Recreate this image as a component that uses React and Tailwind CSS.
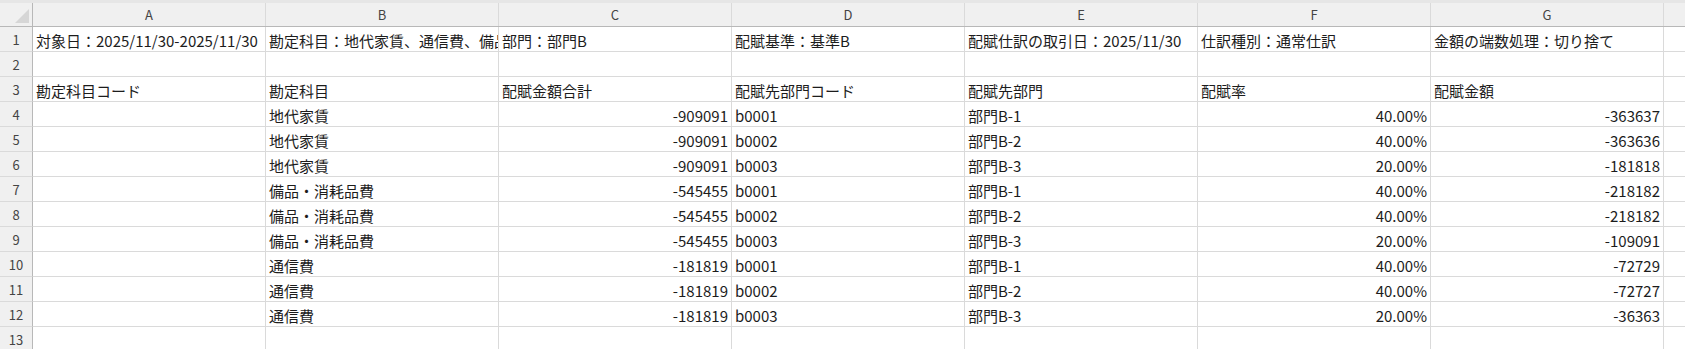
const COLS = ['A', 'B', 'C', 'D', 'E', 'F', 'G'];

const rows = [
  {
    n: 1,
    cells: [
      '対象日：2025/11/30-2025/11/30',
      '勘定科目：地代家賃、通信費、備品・消耗品費',
      '部門：部門B',
      '配賦基準：基準B',
      '配賦仕訳の取引日：2025/11/30',
      '仕訳種別：通常仕訳',
      '金額の端数処理：切り捨て',
    ],
  },
  { n: 2, cells: ['', '', '', '', '', '', ''] },
  {
    n: 3,
    cells: ['勘定科目コード', '勘定科目', '配賦金額合計', '配賦先部門コード', '配賦先部門', '配賦率', '配賦金額'],
  },
  { n: 4, cells: ['', '地代家賃', -909091, 'b0001', '部門B-1', '40.00%', -363637] },
  { n: 5, cells: ['', '地代家賃', -909091, 'b0002', '部門B-2', '40.00%', -363636] },
  { n: 6, cells: ['', '地代家賃', -909091, 'b0003', '部門B-3', '20.00%', -181818] },
  { n: 7, cells: ['', '備品・消耗品費', -545455, 'b0001', '部門B-1', '40.00%', -218182] },
  { n: 8, cells: ['', '備品・消耗品費', -545455, 'b0002', '部門B-2', '40.00%', -218182] },
  { n: 9, cells: ['', '備品・消耗品費', -545455, 'b0003', '部門B-3', '20.00%', -109091] },
  { n: 10, cells: ['', '通信費', -181819, 'b0001', '部門B-1', '40.00%', -72729] },
  { n: 11, cells: ['', '通信費', -181819, 'b0002', '部門B-2', '40.00%', -72727] },
  { n: 12, cells: ['', '通信費', -181819, 'b0003', '部門B-3', '20.00%', -36363] },
];

// numbers and percentages are right-aligned like Excel does
const isNumeric = (v) => typeof v === 'number' || /%$/.test(v);

function Cell({ value }) {
  const right = value !== '' && isNumeric(value);
  return (
    <div
      className={`h-full min-w-0 border-r border-b border-[#dadada] flex items-center overflow-hidden whitespace-nowrap px-[3px] pt-[3px] text-[#1c1c1c] ${
        right ? 'justify-end' : 'justify-start'
      }`}
    >
      {value === '' ? null : String(value)}
    </div>
  );
}

export default function App() {
  return (
    <div
      className="w-[1685px] h-[349px] overflow-hidden bg-white text-[15px] leading-none"
      style={{ fontFamily: '"Noto Sans CJK JP", "Noto Sans", sans-serif' }}
    >
      {/* thin strip above the column headers */}
      <div className="h-[3px] bg-[#e6e6e6]" />

      {/* column headers */}
      <div className="grid grid-cols-[33px_repeat(7,233px)_1fr] h-[24px] bg-[#f0f0f0] border-b border-[#b8b8b8]">
        <div className="relative border-r border-[#b8b8b8]">
          <svg className="absolute right-[3px] bottom-[3px]" width="14" height="14" viewBox="0 0 14 14">
            <polygon points="14,0 14,14 0,14" fill="#d6d6d6" />
          </svg>
        </div>
        {COLS.map((c) => (
          <div
            key={c}
            className="flex items-center justify-center border-r border-[#dadada] text-[13px] text-[#444]"
          >
            {c}
          </div>
        ))}
        <div />
      </div>

      {/* sheet rows */}
      {rows.map((r) => (
        <div key={r.n} className="grid grid-cols-[33px_repeat(7,233px)_1fr] h-[25px]">
          <div className="flex items-center justify-center bg-[#f0f0f0] border-r border-[#b8b8b8] border-b border-b-[#dadada] text-[13px] text-[#444]">
            {r.n}
          </div>
          {r.cells.map((v, i) => (
            <Cell key={i} value={v} />
          ))}
          <div className="border-b border-[#dadada]" />
        </div>
      ))}

      {/* row 13, partly visible */}
      <div className="grid grid-cols-[33px_repeat(7,233px)_1fr] h-[25px]">
        <div className="flex items-center justify-center bg-[#f0f0f0] border-r border-[#b8b8b8] text-[13px] text-[#444]">
          13
        </div>
        {COLS.map((c) => (
          <div key={c} className="border-r border-[#dadada]" />
        ))}
        <div />
      </div>
    </div>
  );
}
